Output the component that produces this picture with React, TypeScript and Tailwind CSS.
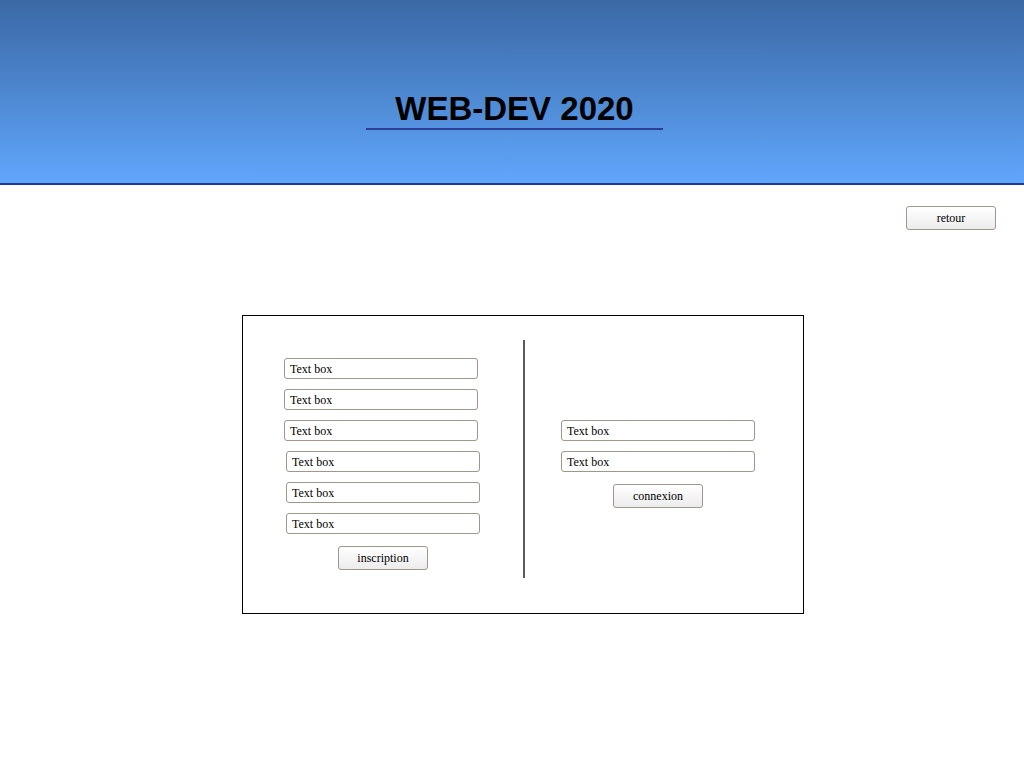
import React from "react";

function TextBox({ className = "" }: { className?: string }) {
  return (
    <div
      className={`h-[21px] w-[194px] rounded-[3px] border border-[#a0968a] bg-white pl-[5px] pt-[1px] text-[12px] leading-[19px] text-black ${className}`}
      style={{ fontFamily: '"Liberation Serif", serif' }}
    >
      Text box
    </div>
  );
}

function Btn({ label, className = "" }: { label: string; className?: string }) {
  return (
    <div
      className={`flex h-[24px] w-[90px] items-center justify-center rounded-[3px] border border-[#a0968a] bg-gradient-to-b from-white to-[#ececec] text-[12px] text-black ${className}`}
      style={{ fontFamily: '"Liberation Serif", serif' }}
    >
      {label}
    </div>
  );
}

export default function App() {
  return (
    <div className="min-h-[768px] w-[1024px] bg-white">
      <header className="flex h-[185px] flex-col items-center border-b-2 border-[#1f3a8c] bg-gradient-to-b from-[#3b69a5] to-[#60a6fc]">
        <h1
          className="ml-[5px] mt-[91px] w-[297px] border-b-2 border-[#2b3f96] pb-[1px] text-center text-[33px] font-bold leading-[36px] text-black"
          style={{ fontFamily: '"Liberation Sans", Arial, sans-serif' }}
        >
          WEB-DEV 2020
        </h1>
      </header>
      <div className="flex justify-end pr-[28px] pt-[21px]">
        <Btn label="retour" />
      </div>
      <div className="ml-[242px] mt-[85px] flex h-[299px] w-[562px] items-start border border-black">
        <div className="flex w-[280px] flex-col gap-[10px] pl-[41px] pt-[42px]">
          <TextBox />
          <TextBox />
          <TextBox />
          <TextBox className="ml-[2px]" />
          <TextBox className="ml-[2px]" />
          <TextBox className="ml-[2px]" />
          <Btn label="inscription" className="ml-[54px] mt-[2px]" />
        </div>
        <div className="mt-[24px] h-[238px] w-[2px] bg-[#5a5a5a]" />
        <div className="flex flex-col gap-[10px] pl-[36px] pt-[104px]">
          <TextBox />
          <TextBox />
          <Btn label="connexion" className="ml-[52px] mt-[2px]" />
        </div>
      </div>
    </div>
  );
}
